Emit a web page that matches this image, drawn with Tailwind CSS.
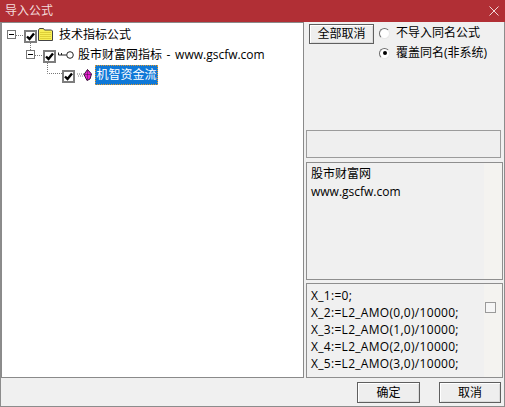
<!doctype html>
<html lang="zh">
<head>
  <meta charset="UTF-8" />
  <title>导入公式</title>
  <script src="https://cdn.jsdelivr.net/npm/@tailwindcss/browser@4"></script>
</head>
<body class="bg-[#f0f0f0] overflow-hidden">
  <div class="w-[505px] h-[407px] flex flex-col border-x border-b border-[#8c8c8c] font-['Open_Sans','Noto_Sans_CJK_SC',sans-serif] text-[12px] text-black">
    <!-- title bar -->
    <div class="h-[22px] -mx-px bg-[#b12f35] flex items-center justify-between pl-[5px] pr-[5px] text-[#f3dcdc] shrink-0">
      <span class="leading-[18px]">导入公式</span>
      <svg class="w-[10px] h-[10px] mr-[1px]" viewBox="0 0 10 10"><path d="M.5.5l9 9M9.5.5l-9 9" stroke="#f0d8d8" stroke-width="1" fill="none"/></svg>
    </div>
    <div class="flex h-[356px] shrink-0">
      <!-- tree -->
      <div class="relative w-[303px] h-[356px] bg-white border border-[#8a8a8a] shrink-0">
        <svg class="absolute left-0 top-0 w-[60px] h-[60px]" viewBox="0 0 60 60" fill="none" stroke="#777" stroke-dasharray="1 1">
          <path d="M14 12.500H21M28.500 20V27M33 32.500H40M45.500 40V50.500H60"/>
        </svg>
        <div class="pt-[2px] flex flex-col relative">
          <div class="h-[20px] flex items-center pl-[5px]">
            <span class="w-[9px] h-[9px] border border-[#777] bg-white flex items-center justify-center mr-[8px] -mt-[1px]"><span class="w-[5px] h-px bg-black"></span></span>
            <span class="w-[13px] h-[13px] border-2 border-[#7d7d7d] bg-white flex items-center justify-center mt-[3px]">
              <svg class="w-[9px] h-[9px]" viewBox="0 0 9 9"><path d="M1 4.500l2.500 2.500L8 1.500" stroke="#000" stroke-width="2.400" fill="none"/></svg>
            </span>
            <svg class="w-[15px] h-[13px] ml-[1px] -mt-[1px]" viewBox="0 0 15 13"><path d="M.5 12.500V2l1-1.500h4l1 1.500h7l1 1v9.500z" fill="#f8ee55" stroke="#444"/><path d="M2 4.500h11M2 6.500h11M2 8.500h11M2 10.500h11" stroke="#d2c22c" stroke-width=".7"/></svg>
            <span class="ml-[6px] leading-[18px] -mt-[1px]">技术指标公式</span>
          </div>
          <div class="h-[20px] flex items-center pl-[24px]">
            <span class="w-[9px] h-[9px] border border-[#777] bg-white flex items-center justify-center mr-[8px] -mt-[1px]"><span class="w-[5px] h-px bg-black"></span></span>
            <span class="w-[13px] h-[13px] border-2 border-[#7d7d7d] bg-white flex items-center justify-center mt-[3px]">
              <svg class="w-[9px] h-[9px]" viewBox="0 0 9 9"><path d="M1 4.500l2.500 2.500L8 1.500" stroke="#000" stroke-width="2.400" fill="none"/></svg>
            </span>
            <svg class="w-[16px] h-[8px] ml-[2px] -mt-[1px]" viewBox="0 0 16 8" fill="none" stroke="#222"><circle cx="12" cy="4" r="3.300"/><path d="M8.500 4H.5M.5 4V1.500M3.500 4V2"/></svg>
            <span class="ml-[4px] leading-[18px] -mt-[1px] whitespace-nowrap [word-spacing:1.500px]">股市财富网指标 - www.gscfw.com</span>
          </div>
          <div class="h-[20px] flex items-center pl-[60px]">
            <span class="w-[13px] h-[13px] border-2 border-[#7d7d7d] bg-white flex items-center justify-center mt-[3px]">
              <svg class="w-[9px] h-[9px]" viewBox="0 0 9 9"><path d="M1 4.500l2.500 2.500L8 1.500" stroke="#000" stroke-width="2.400" fill="none"/></svg>
            </span>
            <svg class="w-[15px] h-[12px] ml-[2px]" viewBox="0 0 15 12"><path d="M0 5h7M1 7h6" stroke="#777" stroke-dasharray="1 1"/><path d="M10.500.5l4 4.500-1.500 5-3 1.500-3-6z" fill="#e81fd0" stroke="#3c163c"/><path d="M7 5.500h7.500M10.500.5V11" stroke="#3c163c" stroke-width=".5"/></svg>
            <span class="ml-[3px] h-[20px] w-[63px] bg-[#0f78d7] border border-dotted border-[#e09a30] text-white leading-[18px] text-center whitespace-nowrap">机智资金流</span>
          </div>
        </div>
      </div>
      <!-- right column -->
      <div class="flex-1 flex flex-col pl-[2px] min-w-0">
        <div class="h-[108px] flex pl-[3px] pt-[2px] shrink-0">
          <button class="w-[65px] h-[20px] bg-[#eeeeee] border border-[#5f5f5f] leading-[18px] shrink-0 shadow-[inset_1px_1px_0_#fff,inset_-1px_-1px_0_#dcdcdc]">全部取消</button>
          <div class="flex flex-col ml-[5px] gap-[2px]">
            <label class="h-[18px] flex items-center gap-[6px]"><span class="w-[11px] h-[11px] rounded-full bg-white border border-t-[#6e6e6e] border-l-[#6e6e6e] border-r-[#e8e8e8] border-b-[#e8e8e8]"></span><span>不导入同名公式</span></label>
            <label class="h-[18px] flex items-center gap-[6px]"><span class="w-[11px] h-[11px] rounded-full bg-white border border-t-[#6e6e6e] border-l-[#6e6e6e] border-r-[#e8e8e8] border-b-[#e8e8e8] flex items-center justify-center"><span class="w-[4px] h-[4px] rounded-full bg-black"></span></span><span class="whitespace-nowrap">覆盖同名(非系统)</span></label>
          </div>
        </div>
        <div class="h-[28px] w-[195px] bg-[#efefef] border border-[#9b9b9b] shrink-0"></div>
        <div class="relative h-[118px] w-[197px] mt-[4px] bg-[#f0f0f0] border border-[#8e8e8e] pl-[4px] pt-[2px] leading-[18px] shrink-0">
          <span class="absolute right-0 top-0 bottom-0 w-[18px] bg-[#f4f3f0]"></span>
          <p>股市财富网</p>
          <p>www.gscfw.com</p>
        </div>
        <div class="relative h-[95px] w-[197px] mt-[3px] bg-[#f0f0f0] border border-[#8e8e8e] pl-[4px] pt-[3px] leading-[17px] tracking-[0.3px] shrink-0">
          <span class="absolute right-0 top-0 bottom-0 w-[18px] bg-[#f4f3f0]"></span>
          <p>X_1:=0;</p>
          <p>X_2:=L2_AMO(0,0)/10000;</p>
          <p>X_3:=L2_AMO(1,0)/10000;</p>
          <p>X_4:=L2_AMO(2,0)/10000;</p>
          <p>X_5:=L2_AMO(3,0)/10000;</p>
          <span class="absolute left-[178px] top-[18px] w-[11px] h-[11px] bg-[#f6f6f6] border border-[#9a9a9a]"></span>
        </div>
      </div>
    </div>
    <!-- footer buttons -->
    <div class="flex justify-end pt-[4px] pr-[3px] gap-[19px]">
      <button class="w-[63px] h-[21px] bg-[#eeeeee] border border-[#5f5f5f] leading-[18px] shadow-[inset_1px_1px_0_#fff,inset_-1px_-1px_0_#dcdcdc]">确定</button>
      <button class="w-[62px] h-[21px] bg-[#eeeeee] border border-[#5f5f5f] leading-[18px] shadow-[inset_1px_1px_0_#fff,inset_-1px_-1px_0_#dcdcdc]">取消</button>
    </div>
  </div>
</body>
</html>
